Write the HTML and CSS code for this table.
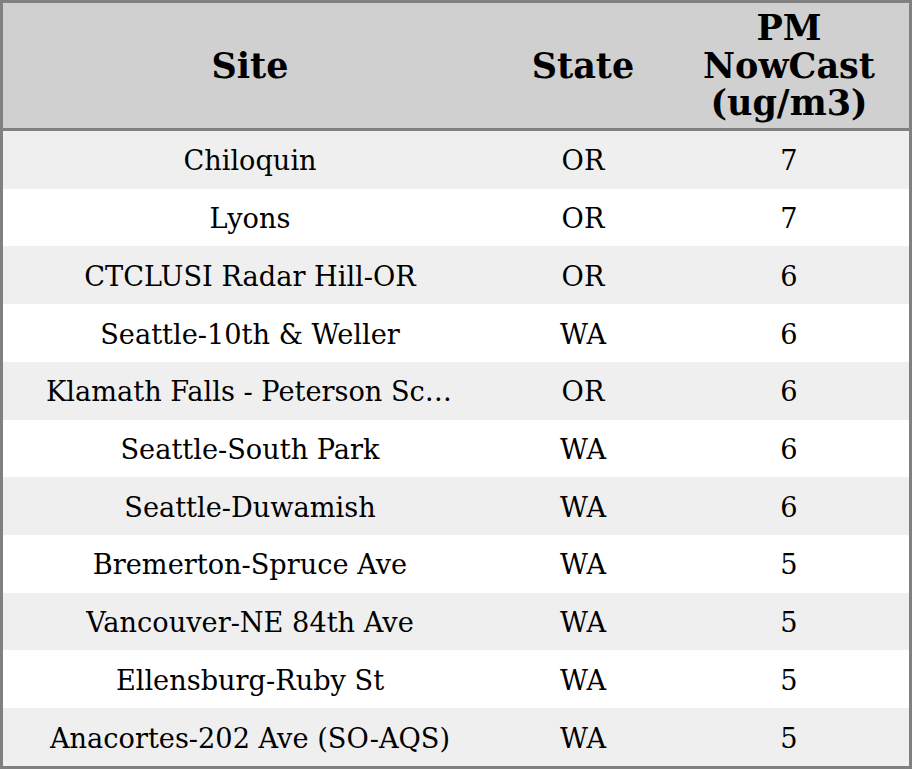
FILE: index.html
```html
<!DOCTYPE html>
<html>
<head>
<meta charset="utf-8">
<link rel="stylesheet" href="styles.css">
</head>
<body>
<table class="aq">
  <colgroup>
    <col class="c-site">
    <col class="c-state">
    <col class="c-pm">
  </colgroup>
  <thead>
    <tr><th>Site</th><th>State</th><th>PM NowCast (ug/m3)</th></tr>
  </thead>
  <tbody>
    <tr><td>Chiloquin</td><td>OR</td><td>7</td></tr>
    <tr><td>Lyons</td><td>OR</td><td>7</td></tr>
    <tr><td>CTCLUSI Radar Hill-OR</td><td>OR</td><td>6</td></tr>
    <tr><td>Seattle-10th &amp; Weller</td><td>WA</td><td>6</td></tr>
    <tr><td>Klamath Falls - Peterson School</td><td>OR</td><td>6</td></tr>
    <tr><td>Seattle-South Park</td><td>WA</td><td>6</td></tr>
    <tr><td>Seattle-Duwamish</td><td>WA</td><td>6</td></tr>
    <tr><td>Bremerton-Spruce Ave</td><td>WA</td><td>5</td></tr>
    <tr><td>Vancouver-NE 84th Ave</td><td>WA</td><td>5</td></tr>
    <tr><td>Ellensburg-Ruby St</td><td>WA</td><td>5</td></tr>
    <tr><td>Anacortes-202 Ave (SO-AQS)</td><td>WA</td><td>5</td></tr>
  </tbody>
</table>
</body>
</html>
```
FILE: styles.css
```css
html, body {
  margin: 0;
  padding: 0;
  background: #ffffff;
}
.aq {
  box-sizing: border-box;
  width: 912px;
  height: 769px;
  border-collapse: separate;
  border-spacing: 0;
  table-layout: fixed;
  border: 3px solid #808080;
  font-family: "DejaVu Serif", serif;
  color: #000;
}
.c-site { width: 494px; }
.c-state { width: 172px; }
.c-pm { width: 240px; }
.aq th {
  box-sizing: border-box;
  background: #d0d0d0;
  font-size: 35px;
  font-weight: bold;
  line-height: 37.5px;
  height: 128px;
  padding: 0 20px;
  border-bottom: 3px solid #808080;
  text-align: center;
  vertical-align: middle;
}
.aq td {
  box-sizing: border-box;
  font-size: 27.2px;
  line-height: 32px;
  height: 57.7px;
  padding: 3px 43px 0;
  text-align: center;
  vertical-align: middle;
  white-space: nowrap;
  overflow: hidden;
  text-overflow: ellipsis;
}
.aq tbody tr:nth-child(odd) td { background: #efefef; }
.aq tbody tr:nth-child(even) td { background: #ffffff; }
```
